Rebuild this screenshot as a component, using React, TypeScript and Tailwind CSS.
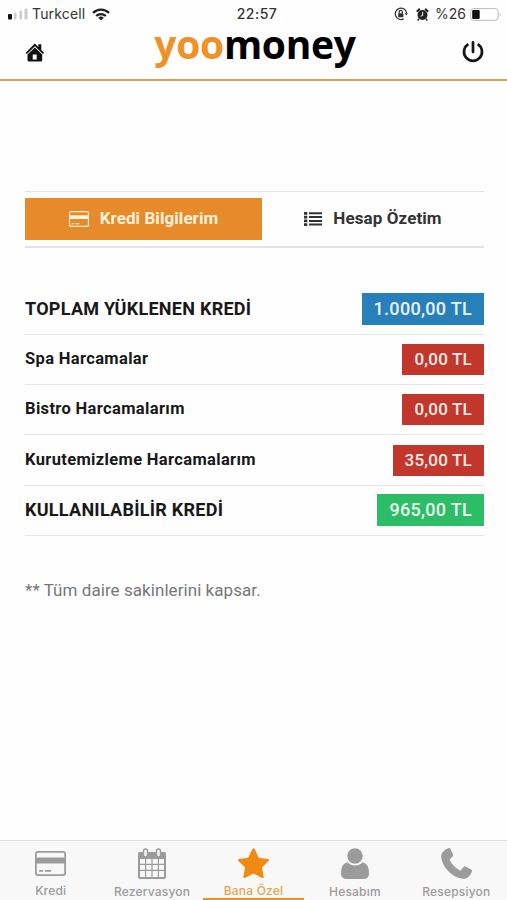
import type { ReactNode } from 'react';

const roboto = "font-['Roboto','Liberation_Sans',sans-serif]";
const inter = "font-['Inter','Liberation_Sans',sans-serif]";

function StatusBar() {
  return (
    <div className={`flex h-[27px] shrink-0 items-center pt-px text-[#333] ${inter}`}>
      <div className="flex flex-1 items-center pl-2">
        <svg width="20" height="12" viewBox="0 0 20 12" className="shrink-0">
          <rect x="0" y="6" width="4" height="5.5" rx="1" fill="#111" />
          <rect x="6" y="4.5" width="2.5" height="7" rx="1" fill="#ccc" />
          <rect x="11.5" y="2.5" width="2.5" height="9" rx="1" fill="#ccc" />
          <rect x="16.5" y="0.5" width="3" height="11" rx="1" fill="#ccc" />
        </svg>
        <span className="ml-1 text-[14px] leading-none tracking-[0.15px]">Turkcell</span>
        <svg width="18" height="13" viewBox="0 0 18 13" className="ml-[7px] shrink-0" fill="none" stroke="#222" strokeWidth="2.3">
          <path d="M1 4.8a11.5 11.5 0 0 1 16 0" />
          <path d="M4.2 8a7 7 0 0 1 9.6 0" />
          <path d="M9 12.6 6.2 9.8a4 4 0 0 1 5.6 0z" fill="#222" stroke="none" />
        </svg>
      </div>
      <div className="ml-[4px] w-[42px] text-center text-[14px] leading-none font-medium tracking-[0.5px]">22:57</div>
      <div className="flex flex-1 items-center justify-end pr-[5px]">
        <svg width="14" height="14" viewBox="0 0 14 14" className="shrink-0" fill="none" stroke="#333" strokeWidth="1.2">
          <path d="M9.8 11.8A5.7 5.7 0 1 1 12.6 6" />
          <path d="M10.7 6.2h3.2l-1.6 2.3z" fill="#333" stroke="none" />
          <rect x="4.2" y="6.2" width="5.2" height="4" rx=".5" fill="#333" stroke="none" />
          <path d="M5.2 6.5V5a1.6 1.6 0 0 1 3.2 0v1.5" />
        </svg>
        <svg width="13" height="13" viewBox="0 0 13 13" className="ml-2 shrink-0">
          <circle cx="6.5" cy="7" r="5" fill="#222" />
          <path d="M.8 3.8 3.8.8M12.2 3.8 9.2.8" stroke="#222" strokeWidth="2" />
          <path d="m3 11-1.3 1.5M10 11l1.3 1.5" stroke="#222" strokeWidth="1.5" />
          <path d="M6.7 4v3.3l-2.2 1" fill="none" stroke="#fff" strokeWidth="1" />
        </svg>
        <span className="ml-[6px] w-[31px] text-[14px] leading-none whitespace-nowrap">%26</span>
        <svg width="32" height="13" viewBox="0 0 32 13" className="ml-1 shrink-0">
          <rect x=".6" y=".6" width="27.5" height="11.8" rx="2.8" fill="#fff" stroke="#bbb" strokeWidth="1" />
          <rect x="2.2" y="2" width="7.5" height="9" rx="1" fill="#111" />
          <path d="M29.8 4.5v4q1.3-2 0-4z" fill="#aaa" />
        </svg>
      </div>
    </div>
  );
}

function HomeIcon() {
  return (
    <svg width="20" height="19" viewBox="0 0 19 19" fill="#111" className="-mt-[2px]">
      <path d="M9.3.5 12.8 4V1.2h3V7l2.8 2.8-1.2 1.3-8-7.9-8 7.9L.2 9.8z" />
      <path fillRule="evenodd" d="M9.4 4.5 16.7 11.6V17q0 1.5-1.5 1.5H3.5Q2 18.5 2 17v-5.4zM7.2 11.5v5h4v-5z" />
    </svg>
  );
}

function CardIcon({ className }: { className: string }) {
  return (
    <svg className={className} viewBox="0 0 30 24" fill="currentColor">
      <path fillRule="evenodd" d="M2.8 0h24.4Q30 0 30 2.8v18.4Q30 24 27.2 24H2.8Q0 24 0 21.2V2.8Q0 0 2.8 0zm0 1.7q-1.1 0-1.1 1.1v3.5h26.6V2.8q0-1.1-1.1-1.1zM1.7 12v9.2q0 1.1 1.1 1.1h24.4q1.1 0 1.1-1.1V12zM4 18.2h3.8v1.7H4zm5.6 0h6v1.7h-6z" />
    </svg>
  );
}

function Row({ label, amount, total, color }: { label: string; amount: string; total?: boolean; color: string }) {
  return (
    <div className="flex h-[50.3px] items-center justify-between border-b border-[#e6e6e6] text-[#181818]">
      <span className={total ? 'text-[18px] leading-none font-bold tracking-[0.27px]' : 'text-[16.5px] leading-none font-bold tracking-[0.35px]'}>{label}</span>
      <span className={`flex items-center px-3 leading-none font-medium text-white/90 ${total ? 'h-[32px] text-[18px] tracking-[0.3px]' : 'h-[31px] text-[17px] tracking-[0.2px]'} ${color}`}>
        {amount}
      </span>
    </div>
  );
}

function NavItem({ label, active, children }: { label: string; active?: boolean; children: ReactNode }) {
  return (
    <div className={`flex flex-1 flex-col items-center border-b-2 pt-[7px] ${active ? 'border-[#ee901f] text-[#f18a13]' : 'border-transparent text-[#9b9b9b]'}`}>
      <div className="flex h-[34px] items-center justify-center">{children}</div>
      <span className={`mt-[5px] text-[12px] leading-[15px] font-medium tracking-[0.2px] whitespace-nowrap ${inter} ${active ? 'text-[#e5a652]' : ''}`}>{label}</span>
    </div>
  );
}

export default function App() {
  return (
    <div className={`flex h-[900px] w-[507px] flex-col overflow-hidden bg-[#fefefe] ${roboto}`}>
      <header className="flex h-[81px] shrink-0 flex-col border-b-2 border-[#df9b52]">
        <StatusBar />
        <div className="flex flex-1 items-center justify-between pr-[23px] pl-[25px]">
          <HomeIcon />
          <h1 className="-mt-[20px] ml-[3px] font-['Open_Sans','Noto_Sans',sans-serif] text-[39px] leading-none font-bold tracking-[-0.3px] text-black">
            <span className="text-[#f09128]">yoo</span>money
          </h1>
          <svg width="22" height="22" viewBox="0 0 22 22" fill="none" stroke="#161616" strokeWidth="2.7" className="-mt-[2px]">
            <path d="M6.3 3.2a9 9 0 1 0 9.4 0" />
            <path d="M11 1.4V11" strokeLinecap="round" />
          </svg>
        </div>
      </header>

      <main className="flex-1 pt-[110px] pr-[23px] pl-[25px]">
        <div className="flex h-[57px] border-t border-b-2 border-[#e2e3e3] py-[6px] text-[17px] font-bold">
          <div className="flex h-[42px] w-[237px] items-center justify-center bg-[#e78b2a] text-[#fff1da]">
            <CardIcon className="mr-[11px] h-[16px] w-[20px]" />
            <span className="tracking-[0.06px]">Kredi Bilgilerim</span>
          </div>
          <div className="flex h-[42px] flex-1 items-center justify-center text-[#333]">
            <svg width="18" height="14" viewBox="0 0 18 14" fill="currentColor" className="mr-[11px] -mt-px">
              <path d="M0 0h3.3v2.7H0zM0 3.8h3.3v2.7H0zM0 7.5h3.3v2.7H0zM0 11.3h3.3V14H0zM5 .3h13v2H5zM5 4.1h13v2H5zM5 7.9h13v2H5zM5 11.6h13v2H5z" />
            </svg>
            <span className="tracking-[0.1px]">Hesap Özetim</span>
          </div>
        </div>

        <div className="mt-[36.5px]">
          <Row label="TOPLAM YÜKLENEN KREDİ" amount="1.000,00 TL" total color="bg-[#2880ba]" />
          <Row label="Spa Harcamalar" amount="0,00 TL" color="bg-[#c1372b]" />
          <Row label="Bistro Harcamalarım" amount="0,00 TL" color="bg-[#c1372b]" />
          <Row label="Kurutemizleme Harcamalarım" amount="35,00 TL" color="bg-[#c1372b]" />
          <Row label="KULLANILABİLİR KREDİ" amount="965,00 TL" total color="bg-[#2dbd66]" />
        </div>
        <p className="mt-[44px] text-[17px] leading-[20px] tracking-[0.06px] text-[#777]">** Tüm daire sakinlerini kapsar.</p>
      </main>

      <nav className="flex h-[60px] shrink-0 border-t border-[#dedede] bg-[#f9f8f9]">
        <NavItem label="Kredi">
          <CardIcon className="h-[25px] w-[31px]" />
        </NavItem>
        <NavItem label="Rezervasyon">
          <svg width="28" height="31" viewBox="0 0 28 31" fill="currentColor">
            <path fillRule="evenodd" d="M2 4h24q2 0 2 2v23q0 2-2 2H2q-2 0-2-2V6q0-2 2-2zm0 7v4.7h5V11zm6.2 0v4.7h5.2V11zm6.4 0v4.7h5.2V11zm6.4 0v4.7h5V11zM2 17v4.8h5V17zm6.2 0v4.8h5.2V17zm6.4 0v4.8h5.2V17zm6.4 0v4.8h5V17zM2 23.1V29h5v-5.9zm6.2 0V29h5.2v-5.9zm6.4 0V29h5.2v-5.9zm6.4 0V29h5v-5.9z" />
            <rect x="5.5" y="1" width="4" height="8" rx="2" fill="#f9f8f9" stroke="currentColor" strokeWidth="1.5" />
            <rect x="18.5" y="1" width="4" height="8" rx="2" fill="#f9f8f9" stroke="currentColor" strokeWidth="1.5" />
          </svg>
        </NavItem>
        <NavItem label="Bana Özel" active>
          <svg width="31" height="30" viewBox="0 0 31 30" fill="currentColor">
            <path d="M15.5.2c.5 0 .9.4 1.2 1l4.2 8.6 9.1 1.3c1.2.2 1.4 1.1.6 1.9L24 19.6l1.6 9.2c.2 1.2-.5 1.6-1.5 1.1l-8.6-4.5-8.6 4.5c-1 .5-1.7.1-1.5-1.1L7 19.6.4 13c-.8-.8-.6-1.7.6-1.9l9.1-1.3 4.2-8.6c.3-.6.7-1 1.2-1z" />
          </svg>
        </NavItem>
        <NavItem label="Hesabım">
          <svg width="28" height="31" viewBox="0 0 28 31" fill="currentColor">
            <circle cx="14" cy="8" r="7.7" />
            <path d="M6.4 14.2Q0 15.6 0 25.2 0 31 5.5 31h17q5.5 0 5.5-5.8 0-9.6-6.4-11-3.2 3.2-7.6 3.2t-7.6-3.2z" />
          </svg>
        </NavItem>
        <NavItem label="Resepsiyon">
          <svg width="31" height="31" viewBox="0 0 31 31" fill="currentColor">
            <path d="M7.5.3c1.1-.5 1.6-.2 2.1.9l2.4 5.2c.4.9.2 1.5-.5 2.2L9.1 11c-.5.5-.5 1-.2 1.6 2.3 4.4 5.3 7.3 9.6 9.6.6.3 1.1.3 1.6-.3l2.5-3c.6-.7 1.1-.8 1.9-.4l5.6 3c.9.5 1.1 1.1.7 2.2-1.5 4.4-5 7.5-9.2 7C11.3 29.5 1.4 19.4.3 9.5-.2 5 3.1 1.8 7.5.3z" />
          </svg>
        </NavItem>
      </nav>
    </div>
  );
}
